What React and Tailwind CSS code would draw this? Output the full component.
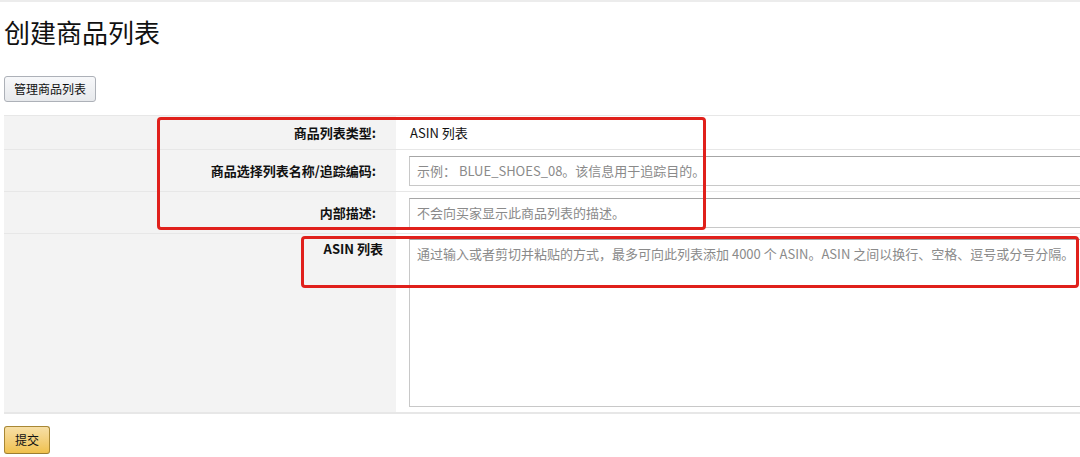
export default function App() {
  const font = { fontFamily: '"Noto Sans CJK SC", "Noto Sans", sans-serif' };
  return (
    <div className="relative w-[1080px] h-[457px] overflow-hidden bg-white text-[#111]" style={font}>
      <div className="h-[2px] bg-[#ececec]" />
      <h1 className="pl-[4px] pt-[13px] text-[26px] leading-[34px] font-normal text-[#111]">创建商品列表</h1>
      <div className="flex pl-[4px] pt-[27px]">
        <button className="h-[26px] px-[9px] text-[12px] leading-[24px] text-[#111] border border-[#adb1b8] rounded-[3px] bg-gradient-to-b from-[#f7f8fa] to-[#e7e9ec]">
          管理商品列表
        </button>
      </div>
      <div className="ml-[4px] mt-[13px] w-[1100px] border-t border-[#e7e7e7] text-[13px]">
        <div className="flex h-[34px] border-b border-[#e7e7e7]">
          <div className="w-[392px] bg-[#f3f3f3] flex items-center justify-end pr-[20px] font-bold">商品列表类型:</div>
          <div className="flex-1 flex items-center pl-[14px]">ASIN 列表</div>
        </div>
        <div className="flex h-[42px] border-b border-[#e7e7e7]">
          <div className="w-[392px] bg-[#f3f3f3] flex items-center justify-end pr-[20px] font-bold">商品选择列表名称/追踪编码:</div>
          <div className="flex-1 flex items-center pl-[13px]">
            <div className="w-full h-[30px] border border-[#c8c8c8] border-t-[#a6a6a6] flex items-center pl-[7px] text-[#8a8a8a]">示例： BLUE_SHOES_08。该信息用于追踪目的。</div>
          </div>
        </div>
        <div className="flex h-[42px] border-b border-[#e7e7e7]">
          <div className="w-[392px] bg-[#f3f3f3] flex items-center justify-end pr-[20px] font-bold">内部描述:</div>
          <div className="flex-1 flex items-center pl-[13px]">
            <div className="w-full h-[30px] border border-[#c8c8c8] border-t-[#a6a6a6] flex items-center pl-[7px] text-[#8a8a8a]">不会向买家显示此商品列表的描述。</div>
          </div>
        </div>
        <div className="flex h-[180px] border-b-2 border-[#e7e7e7]">
          <div className="w-[392px] bg-[#f3f3f3] flex justify-end pr-[13px] pt-[5px] font-bold">ASIN 列表</div>
          <div className="flex-1 pl-[13px] pt-[5px] pb-[5px]">
            <div className="w-full h-full border border-[#c8c8c8] border-t-[#a6a6a6] pl-[7px] pt-[4px] text-[13px] text-[#8a8a8a]">通过输入或者剪切并粘贴的方式，最多可向此列表添加 4000 个 ASIN。ASIN 之间以换行、空格、逗号或分号分隔。</div>
          </div>
        </div>
      </div>
      <div className="flex pl-[4px] pt-[12px]">
        <button className="h-[28px] px-[10px] text-[12px] leading-[26px] text-[#111] border border-[#a88734] border-b-[#9c7e31] rounded-[3px] bg-gradient-to-b from-[#f7dfa5] to-[#f0c14b]">
          提交
        </button>
      </div>
      <div className="absolute left-[157px] top-[117px] w-[549px] h-[113px] border-[3px] border-[#e0201b] rounded-[4px]" />
      <div className="absolute left-[301px] top-[236px] w-[778px] h-[52px] border-[3px] border-[#e0201b] rounded-[4px]" />
    </div>
  );
}
